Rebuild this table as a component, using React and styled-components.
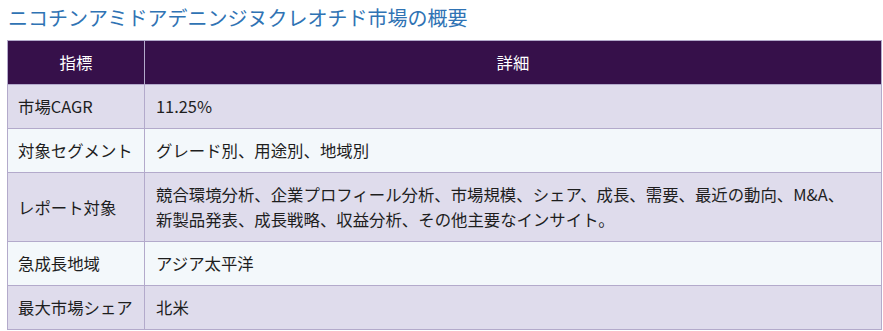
import React from 'react'
import styled, { createGlobalStyle } from 'styled-components'

const GlobalStyle = createGlobalStyle`
  body {
    margin: 0;
    background: #ffffff;
    font-family: "Noto Sans CJK JP", "Noto Sans", sans-serif;
  }
`;

const Page = styled.div`
  padding: 0 2px 0 7px;
`;

const Title = styled.h2`
  margin: 0;
  padding: 4px 0 0 1px;
  height: 40px;
  box-sizing: border-box;
  font-size: 20px;
  font-weight: 400;
  line-height: 28px;
  color: #2f73b4;
`;

const Table = styled.table`
  width: 875px;
  border-collapse: collapse;
  font-size: 16.4px;
  color: #1e1e1e;
`;

const HeadCell = styled.th`
  background: #36104a;
  color: #ffffff;
  font-weight: 400;
  text-align: center;
  border: 1px solid #b3aacb;
  padding: 9px 10px;
  line-height: 25px;
  width: ${p => p.$w || 'auto'};
`;

const Row = styled.tr`
  background: ${p => (p.$alt ? '#f3f8fb' : '#dfdcec')};
`;

const Cell = styled.td`
  border: 1px solid #b3aacb;
  padding: 9px 10px 9px ${p => (p.$first ? '10px' : '11px')};
  line-height: 25px;
  vertical-align: middle;
  white-space: ${p => (p.$first ? 'nowrap' : 'normal')};
`;

const rows = [
  ['市場CAGR', ['11.25%']],
  ['対象セグメント', ['グレード別、用途別、地域別']],
  ['レポート対象', ['競合環境分析、企業プロフィール分析、市場規模、シェア、成長、需要、最近の動向、M&A、', '新製品発表、成長戦略、収益分析、その他主要なインサイト。']],
  ['急成長地域', ['アジア太平洋']],
  ['最大市場シェア', ['北米']],
]

const App = () => {
  return (
    <Page>
      <GlobalStyle />
      <Title>ニコチンアミドアデニンジヌクレオチド市場の概要</Title>
      <Table>
        <thead>
          <tr>
            <HeadCell $w='116px'>指標</HeadCell>
            <HeadCell>詳細</HeadCell>
          </tr>
        </thead>
        <tbody>
          {rows.map((r, i) => (
            <Row key={r[0]} $alt={i % 2 === 1}>
              <Cell $first>{r[0]}</Cell>
              <Cell>
                {r[1].map((line, j) => (
                  <React.Fragment key={j}>
                    {j > 0 && <br />}
                    {line}
                  </React.Fragment>
                ))}
              </Cell>
            </Row>
          ))}
        </tbody>
      </Table>
    </Page>
  )
}

export default App
